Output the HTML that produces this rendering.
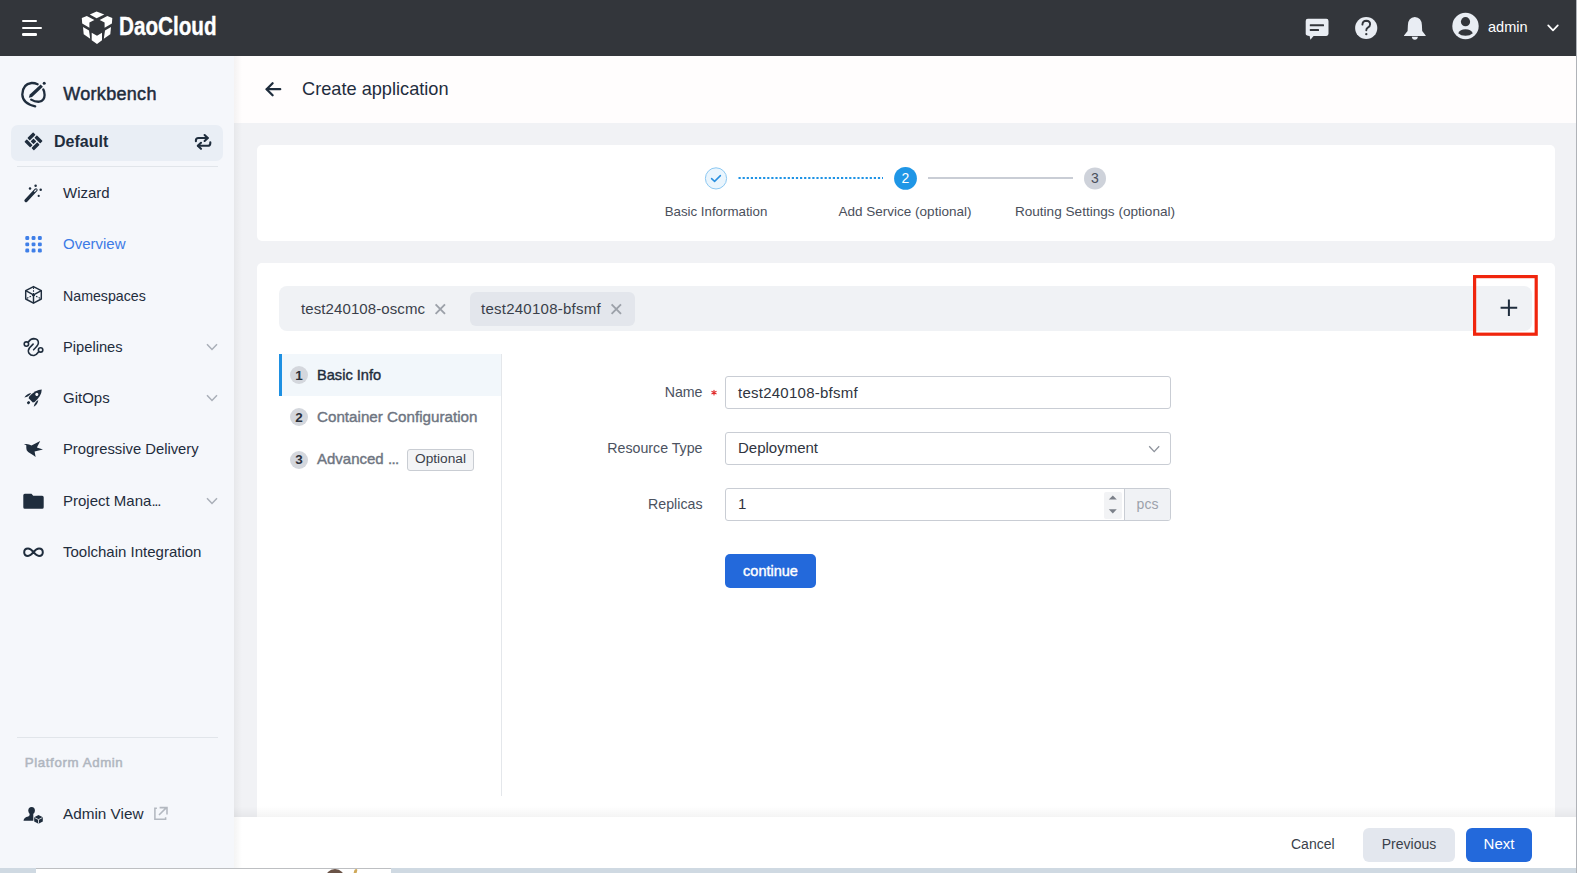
<!DOCTYPE html>
<html><head><meta charset="utf-8">
<style>
*{box-sizing:border-box;margin:0;padding:0}
html,body{width:1577px;height:873px;overflow:hidden;background:#f1f2f5;font-family:"Liberation Sans",sans-serif;color:#1f2d3d}
.a{position:absolute}
.t{position:absolute;white-space:nowrap;line-height:20px;height:20px}
svg{position:absolute;overflow:visible}
#hdr{left:0;top:0;width:1577px;height:56px;background:#33363b}
#side{left:0;top:56px;width:234px;height:812px;background:#f5f7fb}
#phead{left:234px;top:56px;width:1343px;height:67px;background:#fffdfd}
.card{position:absolute;background:#fff;border-radius:5px}
.nav{position:absolute;left:63px;font-size:15px;color:#1f2d3d;line-height:20px;height:20px;white-space:nowrap}
</style></head>
<body>
<!-- header -->
<div id="hdr" class="a">
  <div class="a" style="left:22px;top:19.5px;width:15px;height:2.6px;border-radius:1.3px;background:#fff"></div>
  <div class="a" style="left:22px;top:26.6px;width:20px;height:2.6px;border-radius:1.3px;background:#fff"></div>
  <div class="a" style="left:22px;top:33.1px;width:15px;height:2.6px;border-radius:1.3px;background:#fff"></div>
  <svg style="left:0;top:0" width="120" height="56" viewBox="0 0 120 56">
    <g fill="#fff">
      <polygon points="89.8,14.5 96.6,11.4 104.3,14.5 96.6,18.3"/>
      <polygon points="81.8,17.9 86.8,16 94.4,19.9 89.4,22.4 89.4,27.8 82.2,23.6"/>
      <polygon points="112.3,17.9 107.3,16 99.7,19.9 104.6,22.4 104.6,27.8 111.9,23.6"/>
      <polygon points="83,27 89,30.4 90.2,38.8 83.7,34.2"/>
      <polygon points="111,27 105,30.4 103.8,38.8 110.3,34.2"/>
      <polygon points="91.7,32.7 97,35.8 102,32.7 102,40.3 97,44 91.7,40.3"/>
    </g>
  </svg>
  <div class="t" style="left:119.3px;top:14.4px;font-size:25px;font-weight:700;color:#fff;line-height:24px;height:24px;-webkit-text-stroke:0.35px #fff;transform:scaleX(0.826);transform-origin:0 0">DaoCloud</div>

  <svg style="left:0;top:0" width="1577" height="56" viewBox="0 0 1577 56">
    <!-- chat -->
    <path fill="#e9edf3" d="M1307.8,18.8 L1326.4,18.8 Q1328.5,18.8 1328.5,20.9 L1328.5,33.8 Q1328.5,35.9 1326.4,35.9 L1313.6,35.9 L1310.4,39.7 L1309.6,35.9 Q1305.7,35.9 1305.7,33.8 L1305.7,20.9 Q1305.7,18.8 1307.8,18.8 Z"/>
    <rect x="1309.8" y="24.2" width="14.2" height="2" rx="0.5" fill="#33363b"/>
    <rect x="1309.8" y="28.9" width="9.2" height="2" rx="0.5" fill="#33363b"/>
    <!-- help -->
    <circle cx="1366.2" cy="28" r="11.1" fill="#e9edf3"/>
    <path d="M1362.4,24.6 Q1362.6,20.7 1366.3,20.7 Q1370.1,20.8 1370.1,24.3 Q1370.1,26.4 1367.8,27.6 Q1366.3,28.5 1366.3,30.2" fill="none" stroke="#33363b" stroke-width="1.9" stroke-linecap="round"/>
    <circle cx="1366.3" cy="34.2" r="1.15" fill="#33363b"/>
    <!-- bell -->
    <path fill="#e9edf3" d="M1414.8,16.9 Q1421.6,17.3 1421.9,25 L1422.2,31 L1425.7,35.4 L1425.7,36 L1404,36 L1404,35.4 L1407.6,31 L1407.9,25 Q1408.2,17.3 1414.8,16.9 Z"/>
    <path fill="#e9edf3" d="M1411.8,36.8 L1417.9,36.8 Q1417.5,39.8 1414.85,39.8 Q1412.2,39.8 1411.8,36.8 Z"/>
    <!-- avatar -->
    <circle cx="1465.5" cy="26" r="13.2" fill="#e9edf3"/>
    <circle cx="1465.5" cy="21.7" r="4.6" fill="#33363b"/>
    <path d="M1458.2,33.2 Q1460,29.2 1465.5,29.2 Q1471,29.2 1472.8,33.2 Q1470,35.7 1465.5,35.7 Q1461,35.7 1458.2,33.2 Z" fill="#33363b"/>
    <!-- chevron -->
    <path d="M1548.2,25.3 L1553,30.3 L1557.8,25.3" fill="none" stroke="#fff" stroke-width="1.7" stroke-linecap="round" stroke-linejoin="round"/>
  </svg>
  <div class="t" style="left:1488px;top:16.5px;font-size:14.5px;color:#fff">admin</div>
</div>

<!-- sidebar -->
<div id="side" class="a"></div>



<!-- sidebar content -->
<div class="a" style="left:11px;top:125px;width:212px;height:36px;border-radius:7px;background:#e9eef5"></div>

<svg style="left:0;top:56px" width="234" height="812" viewBox="0 56 234 812">
  <!-- workbench icon -->
  <g fill="none" stroke="#1f2d3d" stroke-width="2.3" stroke-linecap="round">
    <path d="M37.6,84.2 Q34.5,82.8 31.5,83 Q22.5,84 22.3,94.5 Q22.6,103.5 35.2,106.3"/>
    <path d="M31.2,99.6 Q35,102 39.3,101.7 Q44.5,100.8 44.6,95 Q44.6,91.5 43.3,89.5"/>
  </g>
  <path d="M28.8,97.8 L29.8,94.6 L40.6,84.6 L42.9,86.8 L32.1,96.9 Z" fill="#1f2d3d"/>
  <circle cx="44.2" cy="83.3" r="1.5" fill="#1f2d3d"/>
  <!-- default icon -->
  <g fill="#1f2d3d" transform="translate(33.5 141.4) rotate(-45)">
    <rect x="-2" y="-6.7" width="8.2" height="3.4" rx="0.7"/>
    <rect x="3.3" y="-2" width="3.4" height="8.2" rx="0.7"/>
    <rect x="-6.2" y="3.3" width="8.2" height="3.4" rx="0.7"/>
    <rect x="-6.7" y="-6.2" width="3.4" height="8.2" rx="0.7"/>
    <rect x="-2" y="-2" width="4" height="4" rx="0.5"/>
  </g>
  <!-- swap icon -->
  <g fill="none" stroke="#1f2d3d" stroke-width="2.1" stroke-linecap="round" stroke-linejoin="round">
    <path d="M195.9,141.3 L195.9,140.5 Q195.9,138 198.5,138 L207.5,138"/>
    <path d="M204.6,135 L207.8,138 L204.6,141"/>
    <path d="M210.3,142.3 L210.3,143.2 Q210.3,145.8 207.7,145.8 L198,145.8"/>
    <path d="M201,142.8 L197.8,145.8 L201,148.8"/>
  </g>
  <!-- wizard -->
  <path d="M26,200.6 L36,189.9" stroke="#1f2d3d" stroke-width="3.3" stroke-linecap="round"/>
  <path d="M34.6,191.4 L36.1,189.8" stroke="#f5f7fb" stroke-width="1.1" stroke-linecap="round"/>
  <g fill="#1f2d3d">
    <circle cx="30" cy="188.6" r="1.25"/>
    <circle cx="35.6" cy="185.8" r="1.25"/>
    <circle cx="40.7" cy="189.8" r="1.25"/>
    <circle cx="38.7" cy="195.9" r="1.1"/>
  </g>
  <!-- overview grid -->
  <g fill="#3f7fe8">
    <rect x="25.3" y="236.1" width="3.9" height="3.9" rx="1.3"/><rect x="31.6" y="236.1" width="3.9" height="3.9" rx="1.3"/><rect x="37.9" y="236.1" width="3.9" height="3.9" rx="1.3"/>
    <rect x="25.3" y="242.4" width="3.9" height="3.9" rx="1.3"/><rect x="31.6" y="242.4" width="3.9" height="3.9" rx="1.3"/><rect x="37.9" y="242.4" width="3.9" height="3.9" rx="1.3"/>
    <rect x="25.3" y="248.6" width="3.9" height="3.9" rx="1.3"/><rect x="31.6" y="248.6" width="3.9" height="3.9" rx="1.3"/><rect x="37.9" y="248.6" width="3.9" height="3.9" rx="1.3"/>
  </g>
  <!-- namespaces cube -->
  <g fill="none" stroke="#1f2d3d" stroke-width="1.45" stroke-linejoin="round">
    <path d="M33.5,286.6 L41.3,290.7 L41.3,299 L33.5,303.2 L25.7,299 L25.7,290.7 Z"/>
    <path d="M25.7,290.7 L33.5,294.9 L41.3,290.7"/>
    <path d="M33.5,294.9 L33.5,303.2"/>
  </g>
  <g fill="none" stroke="#1f2d3d" stroke-width="1.1" stroke-dasharray="1.6 1.3">
    <path d="M33.5,287.3 L33.5,294.9"/>
    <path d="M33.5,294.9 L26.5,298.6"/>
    <path d="M33.5,294.9 L40.5,298.6"/>
  </g>
  <!-- pipelines -->
  <g fill="none" stroke="#1f2d3d" stroke-width="1.6" stroke-linecap="round">
    <circle cx="26.4" cy="344.1" r="2.2"/>
    <circle cx="40.6" cy="349.9" r="2.2"/>
    <path d="M28.2,342.2 Q30.5,338.6 33.8,338.6 Q38.6,338.8 38.4,343 Q38.2,345.3 33.6,349.8"/>
    <path d="M33.1,344.1 L29.6,347.8 Q27.5,350.5 29,353.3 Q30.8,355.8 34,355.5 Q36.5,355 38.7,351.8"/>
  </g>
  <!-- gitops rocket -->
  <g transform="translate(34.4 396.8) rotate(-45)" fill="#1f2d3d">
    <path d="M10.4,0 Q6,-4.3 -3.5,-3.8 L-5.2,-3 L-5.2,3 L-3.5,3.8 Q6,4.3 10.4,0 Z"/>
    <path d="M0.5,-5 Q-3,-7.8 -7.6,-6.6 Q-5.2,-4.8 -2,-4.6 Z"/>
    <path d="M0.5,5 Q-3,7.8 -7.6,6.6 Q-5.2,4.8 -2,4.6 Z"/>
    <rect x="-9.8" y="-1.3" width="3" height="2.6" rx="1"/>
    <circle cx="3.4" cy="0" r="1.55" fill="#f5f7fb"/>
  </g>
  <!-- progressive bird -->
  <path fill="#1f2d3d" d="M23.9,444.2 Q27,443.6 29,444.5 L31.5,445.6 L40.2,441 L36.9,447.4 L43,449.4 L34.6,451.4 L35.6,457 Q33.2,454.8 31.3,453.9 Q27.3,452.2 26.7,450.3 Q26.1,447.2 26.3,445.2 Z"/>
  <!-- folder -->
  <path fill="#1f2d3d" d="M23.3,495.2 Q23.3,493.7 24.8,493.7 L31.5,493.7 L33.2,495.8 L42.2,495.8 Q43.7,495.8 43.7,497.3 L43.7,507.2 Q43.7,508.7 42.2,508.7 L24.8,508.7 Q23.3,508.7 23.3,507.2 Z"/>
  <!-- infinity -->
  <path fill="none" stroke="#1f2d3d" stroke-width="2" d="M33.5,552.2 Q30.5,548.5 28,548.5 Q24.2,548.5 24.2,552.2 Q24.2,555.9 28,555.9 Q30.5,555.9 33.5,552.2 Q36.5,548.5 39,548.5 Q42.8,548.5 42.8,552.2 Q42.8,555.9 39,555.9 Q36.5,555.9 33.5,552.2 Z"/>
  <!-- chevrons -->
  <g fill="none" stroke="#a9afb8" stroke-width="1.5">
    <path d="M207,344.2 L212,349.4 L217,344.2"/>
    <path d="M207,395.2 L212,400.4 L217,395.2"/>
    <path d="M207,498.2 L212,503.4 L217,498.2"/>
  </g>
  <!-- admin icon -->
  <g fill="#1f2d3d">
    <ellipse cx="31.6" cy="810.5" rx="3.3" ry="3.6"/>
    <path d="M23.5,820.8 Q23.8,817.3 28.3,816.4 L29.6,815.2 L29.6,812 L33.3,812 L33.3,820.8 Z"/>
    <path d="M38.5,815 L42.8,817.2 L42.8,821.6 L38.5,823.8 L34.2,821.6 L34.2,817.2 Z"/>
  </g>
  <path d="M34.6,817.6 L38.5,819.6 L42.4,817.6 M38.5,819.6 L38.5,823.6" stroke="#f5f7fb" stroke-width="0.8" fill="none"/>
  <!-- external link -->
  <g fill="none" stroke="#b3b8c0" stroke-width="1.55">
    <path d="M156.9,808.3 L154.9,808.3 L154.9,819.2 L165.6,819.2 L165.6,817.2"/>
    <path d="M159,815 L166.4,807.6 M159.6,807.6 L167,807.6 L167,814.6"/>
  </g>
  <!-- dividers -->
  <rect x="17" y="166" width="201" height="1" fill="#e1e5ea"/>
  <rect x="17" y="737" width="201" height="1" fill="#e1e5ea"/>
</svg>
<div class="t" style="left:63.3px;top:84px;font-size:18px;letter-spacing:0.3px;-webkit-text-stroke:0.5px #1f2d3d;color:#1f2d3d">Workbench</div>
<div class="t" style="left:54px;top:132.3px;font-size:16px;font-weight:700;color:#1f2d3d">Default</div>
<div class="nav" style="top:183px">Wizard</div>
<div class="nav" style="top:234px;color:#3d7be6">Overview</div>
<div class="nav" style="top:286px;font-size:14.2px">Namespaces</div>
<div class="nav" style="top:337px;font-size:14.7px">Pipelines</div>
<div class="nav" style="top:388px">GitOps</div>
<div class="nav" style="top:439px;font-size:14.8px">Progressive Delivery</div>
<div class="nav" style="top:491px">Project Mana<span style="letter-spacing:-1.2px">...</span></div>
<div class="nav" style="top:542px">Toolchain Integration</div>
<div class="t" style="left:24.8px;top:753px;font-size:13.3px;letter-spacing:0.6px;-webkit-text-stroke:0.5px #b0b6bf;color:#b0b6bf">Platform Admin</div>
<div class="nav" style="top:804px;font-size:15.3px">Admin View</div>

<!-- page header -->
<div id="phead" class="a"></div>

<!-- steps card -->
<div class="card" style="left:257px;top:145px;width:1298px;height:96px"></div>

<!-- main card -->
<div class="card" style="left:257px;top:263px;width:1298px;height:600px"></div>


<!-- page title -->
<svg style="left:0;top:0" width="1577" height="873" viewBox="0 0 1577 873">
  <g fill="none" stroke="#1f2d3d" stroke-width="2.3" stroke-linecap="round" stroke-linejoin="round">
    <path d="M266.8,89.2 L280.2,89.2"/>
    <path d="M272.6,83.2 L266.6,89.2 L272.6,95.2"/>
  </g>
</svg>
<div class="t" style="left:302px;top:78.7px;font-size:18.2px;color:#1f2d3d">Create application</div>

<!-- steps -->
<svg style="left:0;top:0" width="1577" height="873" viewBox="0 0 1577 873">
  <circle cx="716" cy="178.4" r="10.6" fill="#eaf5fd" stroke="#8cc8f2" stroke-width="1"/>
  <path d="M711.6,178.6 L714.6,181.4 L720.4,175.6" fill="none" stroke="#2a8fdf" stroke-width="1.5" stroke-linecap="round" stroke-linejoin="round"/>
  <line x1="738.5" y1="178" x2="883" y2="178" stroke="#1f93e5" stroke-width="2.2" stroke-dasharray="2.2 1.9"/>
  <circle cx="905.5" cy="178.4" r="11.4" fill="#1f96e6"/>
  <line x1="928" y1="178" x2="1073" y2="178" stroke="#c9cdd5" stroke-width="2"/>
  <circle cx="1095" cy="178.4" r="11" fill="#ced2da"/>
</svg>
<div class="t" style="left:885.5px;top:168.4px;width:40px;text-align:center;font-size:14px;color:#fff">2</div>
<div class="t" style="left:1075px;top:168.4px;width:40px;text-align:center;font-size:14px;color:#4a4f5b">3</div>
<div class="t" style="left:616px;top:202.3px;width:200px;text-align:center;font-size:13.3px;color:#4a4f5b">Basic Information</div>
<div class="t" style="left:805px;top:202.3px;width:200px;text-align:center;font-size:13.5px;color:#4a4f5b">Add Service (optional)</div>
<div class="t" style="left:995px;top:202.3px;width:200px;text-align:center;font-size:13.6px;color:#4a4f5b">Routing Settings (optional)</div>

<!-- tabs -->
<div class="a" style="left:279px;top:286px;width:1253px;height:45px;border-radius:8px;background:#f0f2f5"></div>
<div class="a" style="left:470px;top:292px;width:165px;height:34px;border-radius:6px;background:#e3e6ec"></div>
<div class="t" style="left:301px;top:299px;font-size:15px;letter-spacing:0.1px;color:#3a3f4a">test240108-oscmc</div>
<div class="t" style="left:481px;top:299px;font-size:15px;letter-spacing:0.25px;color:#3a3f4a">test240108-bfsmf</div>
<svg style="left:0;top:0" width="1577" height="873" viewBox="0 0 1577 873">
  <g stroke="#9ca1a9" stroke-width="1.9" stroke-linecap="butt">
    <path d="M435.6,304.4 L445,313.8 M445,304.4 L435.6,313.8"/>
    <path d="M611.6,304.4 L621,313.8 M621,304.4 L611.6,313.8"/>
  </g>
  <path d="M1500.6,307.8 L1517.2,307.8 M1508.9,299.5 L1508.9,316.1" stroke="#1f2d3d" stroke-width="2"/>
  <rect x="1474.6" y="276.6" width="61.6" height="57.6" fill="none" stroke="#f0250d" stroke-width="3.2"/>
</svg>

<!-- subnav -->
<div class="a" style="left:279px;top:354px;width:222px;height:42px;background:#f2f7fb"></div>
<div class="a" style="left:279px;top:354px;width:3px;height:42px;background:#1e90e2"></div>
<div class="a" style="left:501px;top:354px;width:1px;height:442px;background:#e4e7eb"></div>
<div class="a" style="left:290px;top:366px;width:18px;height:18px;border-radius:9px;background:#d4d7dd"></div>
<div class="a" style="left:290px;top:408px;width:18px;height:18px;border-radius:9px;background:#d4d7dd"></div>
<div class="a" style="left:290px;top:450.6px;width:18px;height:18px;border-radius:9px;background:#d4d7dd"></div>
<div class="t" style="left:289px;top:365.5px;width:20px;text-align:center;font-size:13.5px;font-weight:700;color:#2b303a">1</div>
<div class="t" style="left:289px;top:407.5px;width:20px;text-align:center;font-size:13.5px;font-weight:700;color:#2b303a">2</div>
<div class="t" style="left:289px;top:450.1px;width:20px;text-align:center;font-size:13.5px;font-weight:700;color:#2b303a">3</div>
<div class="t" style="left:317px;top:364.5px;font-size:14.6px;-webkit-text-stroke:0.4px #1f2d3d;color:#1f2d3d">Basic Info</div>
<div class="t" style="left:317px;top:406.7px;font-size:15.2px;-webkit-text-stroke:0.4px #6e7581;color:#6e7581">Container Configuration</div>
<div class="t" style="left:317px;top:449.2px;font-size:15px;-webkit-text-stroke:0.4px #6e7581;color:#6e7581">Advanced <span style="letter-spacing:-0.6px">...</span></div>
<div class="a" style="left:407px;top:449px;width:67px;height:22px;border:1px solid #c9cdd3;border-radius:3px;background:#f3f4f6"></div>
<div class="t" style="left:407px;top:449.3px;width:67px;text-align:center;font-size:13.7px;color:#3a3f4a">Optional</div>

<!-- form -->
<div class="t" style="left:500px;top:382px;width:202.5px;text-align:right;font-size:14.2px;color:#4b5260">Name</div>
<div class="t" style="left:500px;top:438px;width:202.5px;text-align:right;font-size:14.2px;color:#4b5260">Resource Type</div>
<div class="t" style="left:500px;top:494px;width:202.5px;text-align:right;font-size:14.2px;color:#4b5260">Replicas</div>
<svg style="left:0;top:0" width="1577" height="873" viewBox="0 0 1577 873">
  <g stroke="#e02b2b" stroke-width="1.1" stroke-linecap="round">
    <path d="M714,390.2 L714,395 M711.9,391.4 L716.1,393.8 M716.1,391.4 L711.9,393.8"/>
  </g>
</svg>
<div class="a" style="left:725px;top:376px;width:446px;height:33px;border:1px solid #c9cdd4;border-radius:3px;background:#fff"></div>
<div class="a" style="left:725px;top:432px;width:446px;height:33px;border:1px solid #c9cdd4;border-radius:3px;background:#fff"></div>
<div class="a" style="left:725px;top:488px;width:446px;height:33px;border:1px solid #c9cdd4;border-radius:3px;background:#fff;overflow:hidden">
  <div class="a" style="left:397.8px;top:-1px;width:48px;height:33px;background:#f0f2f5;border-left:1px solid #c9cdd4"></div>
  <div class="a" style="left:378px;top:2.5px;width:18px;height:27px;background:#f2f3f5;border-radius:2px"></div>
</div>
<div class="t" style="left:738px;top:383px;font-size:15px;letter-spacing:0.25px;color:#2f3440">test240108-bfsmf</div>
<div class="t" style="left:738px;top:437.8px;font-size:15px;color:#2f3440">Deployment</div>
<div class="t" style="left:738px;top:493.6px;font-size:15px;color:#2f3440">1</div>
<div class="t" style="left:1124px;top:494px;width:47px;text-align:center;font-size:14px;color:#9ca2ab">pcs</div>
<svg style="left:0;top:0" width="1577" height="873" viewBox="0 0 1577 873">
  <path d="M1149.2,446.2 L1154.2,451.6 L1159.2,446.2" fill="none" stroke="#8d929b" stroke-width="1.3"/>
  <path d="M1108.8,499.6 L1112.8,495.4 L1116.8,499.6 Z" fill="#7b8089"/>
  <path d="M1108.8,509.2 L1112.8,513.4 L1116.8,509.2 Z" fill="#7b8089"/>
</svg>
<div class="a" style="left:725px;top:554px;width:91px;height:34px;border-radius:5px;background:#2369db"></div>
<div class="t" style="left:725px;top:561px;width:91px;text-align:center;font-size:14.5px;-webkit-text-stroke:0.4px #fff;color:#fff">continue</div>

<!-- footer -->
<div class="a" style="left:234px;top:806px;width:1342px;height:11px;background:linear-gradient(180deg,rgba(0,0,0,0),rgba(0,0,0,0.045))"></div>
<div class="a" style="left:234px;top:816.5px;width:1342px;height:51.5px;background:#fff"></div>


<div class="t" style="left:1291px;top:834px;font-size:14px;color:#3a3f4a">Cancel</div>
<div class="a" style="left:1363px;top:828px;width:92px;height:34px;border-radius:6px;background:#e3e7ee"></div>
<div class="t" style="left:1363px;top:834px;width:92px;text-align:center;font-size:14px;color:#3a3f4a">Previous</div>
<div class="a" style="left:1466px;top:828px;width:66px;height:34px;border-radius:6px;background:#2369db"></div>
<div class="t" style="left:1466px;top:834px;width:66px;text-align:center;font-size:15px;color:#fff">Next</div>

<!-- bottom strip -->
<div class="a" style="left:0;top:868px;width:1577px;height:5px;background:#cfd9e2"></div>
<div class="a" style="left:36px;top:868px;width:355px;height:5px;background:#fff;border-top:1px solid #bdbfc2"></div>
<div class="a" style="left:324.5px;top:869.2px;width:20px;height:10px;border-radius:10px 10px 0 0;background:#6a5347"></div>
<div class="a" style="left:354.3px;top:868.8px;width:3px;height:5px;border-radius:1.5px 1.5px 0 0;background:#cfa95a;transform:skewX(-15deg)"></div>
<div class="a" style="left:234px;top:56px;width:8px;height:812px;background:linear-gradient(90deg,rgba(0,0,0,0.045),rgba(0,0,0,0))"></div>
<div class="a" style="left:1576px;top:0;width:1px;height:873px;background:#b0b3b8"></div>
</body></html>
